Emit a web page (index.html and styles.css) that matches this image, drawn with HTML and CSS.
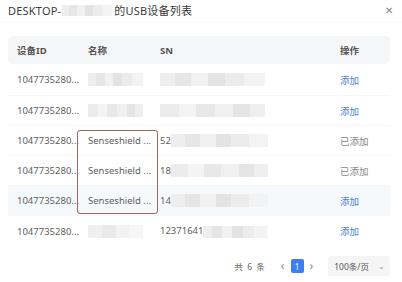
FILE: index.html
```html
<!DOCTYPE html>
<html lang="zh-CN">
<head>
    <meta charset="UTF-8">
    <title>USB设备列表</title>
    <link rel="stylesheet" href="styles.css">
</head>
<body>

    <div class="modal">
        <!-- Title bar -->
        <div class="modal-header">
            <div class="title">DESKTOP-<span class="mosaic mosaic-title"></span>的USB设备列表</div>
            <span class="close">&#x2715;</span>
        </div>

        <!-- Device table -->
        <div class="table-wrap">
            <table class="device-table">
                <colgroup>
                    <col class="col-id">
                    <col class="col-name">
                    <col class="col-sn">
                    <col class="col-op">
                </colgroup>
                <thead>
                    <tr>
                        <th>设备ID</th>
                        <th>名称</th>
                        <th>SN</th>
                        <th>操作</th>
                    </tr>
                </thead>
                <tbody>
                    <tr>
                        <td>1047735280...</td>
                        <td><span class="mosaic mosaic-name"></span></td>
                        <td><span class="mosaic mosaic-sn"></span></td>
                        <td><a href="#" class="link">添加</a></td>
                    </tr>
                    <tr>
                        <td>1047735280...</td>
                        <td><span class="mosaic mosaic-name alt"></span></td>
                        <td><span class="mosaic mosaic-sn alt"></span></td>
                        <td><a href="#" class="link">添加</a></td>
                    </tr>
                    <tr>
                        <td>1047735280...</td>
                        <td>Senseshield ...</td>
                        <td>52<span class="mosaic mosaic-sn-short"></span></td>
                        <td><span class="done">已添加</span></td>
                    </tr>
                    <tr>
                        <td>1047735280...</td>
                        <td>Senseshield ...</td>
                        <td>18<span class="mosaic mosaic-sn-short alt"></span></td>
                        <td><span class="done">已添加</span></td>
                    </tr>
                    <tr class="hover">
                        <td>1047735280...</td>
                        <td>Senseshield ...</td>
                        <td>14<span class="mosaic mosaic-sn-short"></span></td>
                        <td><a href="#" class="link">添加</a></td>
                    </tr>
                    <tr>
                        <td>1047735280...</td>
                        <td><span class="mosaic mosaic-name light"></span></td>
                        <td>12371641<span class="mosaic mosaic-sn-tail"></span></td>
                        <td><a href="#" class="link">添加</a></td>
                    </tr>
                </tbody>
            </table>

            <!-- Annotation box drawn over the name column -->
            <div class="highlight-box"></div>
        </div>

        <!-- Pagination -->
        <div class="pager">
            <span class="total">共 6 条</span>
            <span class="arrow">&#x2039;</span>
            <span class="page active">1</span>
            <span class="arrow">&#x203A;</span>
            <span class="size-select">100条/页 <span class="caret">&#x2304;</span></span>
        </div>
    </div>

</body>
</html>
```

FILE: styles.css
```css
/* Basic reset */
* {
    margin: 0;
    padding: 0;
    box-sizing: border-box;
}

body {
    font-family: 'Noto Sans', 'Noto Sans CJK SC', sans-serif;
    background: #fff;
    color: #555;
    width: 402px;
    height: 282px;
    overflow: hidden;
}

.modal {
    display: flex;
    flex-direction: column;
    height: 100%;
}

/* Title bar */
.modal-header {
    display: flex;
    justify-content: space-between;
    align-items: center;
    height: 23px;
    padding: 0 9px 2px 8px;
    border-bottom: 1px solid #f6f6f6;
}

.title {
    display: flex;
    align-items: center;
    font-size: 11px;
    color: #3a3a3a;
    letter-spacing: 0.2px;
}

.close {
    font-size: 10px;
    color: #888;
}

/* Pixelated blur blocks */
.mosaic {
    display: inline-block;
    height: 13px;
    vertical-align: middle;
    background: linear-gradient(90deg,
        #eeeeee 0 14%, #e6e6e6 14% 30%, #f1f1f1 30% 46%,
        #e3e3e3 46% 62%, #ececec 62% 80%, #f3f3f3 80% 100%);
}

.mosaic.alt {
    background: linear-gradient(90deg,
        #ececec 0 18%, #f4f4f4 18% 34%, #e8e8e8 34% 52%,
        #f0f0f0 52% 70%, #e5e5e5 70% 86%, #efefef 86% 100%);
}

.mosaic.light {
    background: linear-gradient(90deg,
        #efefef 0 25%, #e9e9e9 25% 50%, #f2f2f2 50% 75%, #f6f6f6 75% 100%);
}

.mosaic-title {
    width: 50px;
    height: 11px;
    margin: 0 2px 0 1px;
}

.mosaic-name {
    width: 55px;
}

.mosaic-sn {
    width: 105px;
}

.mosaic-sn-short {
    width: 97px;
}

.mosaic-sn-tail {
    width: 64px;
    height: 12px;
}

/* Table */
.table-wrap {
    position: relative;
    margin: 13px 12px 0 8px;
}

.device-table {
    width: 100%;
    border-collapse: separate;
    border-spacing: 0;
    table-layout: fixed;
    font-size: 9.5px;
}

.col-id { width: 71px; }
.col-name { width: 72px; }
.col-sn { width: 180px; }
.col-op { width: 59px; }

.device-table th {
    height: 28px;
    padding-left: 9px;
    text-align: left;
    font-weight: 700;
    color: #555;
    background: #f5f6f7;
}

.device-table th:first-child {
    border-radius: 5px 0 0 5px;
}

.device-table th:last-child {
    border-radius: 0 5px 5px 0;
}

.device-table td {
    height: 30px;
    padding-left: 9px;
    white-space: nowrap;
    overflow: hidden;
    color: #606060;
    border-bottom: 1px solid #f7f7f7;
}

.device-table tbody tr:first-child td {
    height: 32px;
}

.device-table tr.hover td {
    background: #f6f9fb;
}

.device-table tbody tr:last-child td {
    border-bottom: none;
}

.link {
    color: #4a7fd6;
    text-decoration: none;
}

.done {
    color: #888;
}

/* Red annotation rectangle */
.highlight-box {
    position: absolute;
    left: 69px;
    top: 94px;
    width: 81px;
    height: 84px;
    border: 1px solid #a4625b;
    border-radius: 3px;
    pointer-events: none;
}

/* Pagination */
.pager {
    display: flex;
    justify-content: flex-end;
    align-items: center;
    margin-top: 10px;
    padding-right: 12px;
    font-size: 8.5px;
    color: #666;
}

.total {
    margin-right: 9px;
    letter-spacing: 1px;
}

.arrow {
    font-size: 12px;
    color: #888;
    padding: 0 6px;
    line-height: 1;
}

.page {
    width: 13px;
    height: 14px;
    display: flex;
    align-items: center;
    justify-content: center;
    font-size: 8px;
    border-radius: 2px;
}

.page.active {
    background: #3a80f0;
    color: #fff;
}

.size-select {
    display: flex;
    align-items: center;
    gap: 9px;
    margin-left: 9px;
    height: 20px;
    padding: 0 5px 0 6px;
    background: #f5f5f5;
    border-radius: 3px;
    color: #555;
}

.caret {
    font-size: 8px;
    color: #999;
    line-height: 1;
}
```
